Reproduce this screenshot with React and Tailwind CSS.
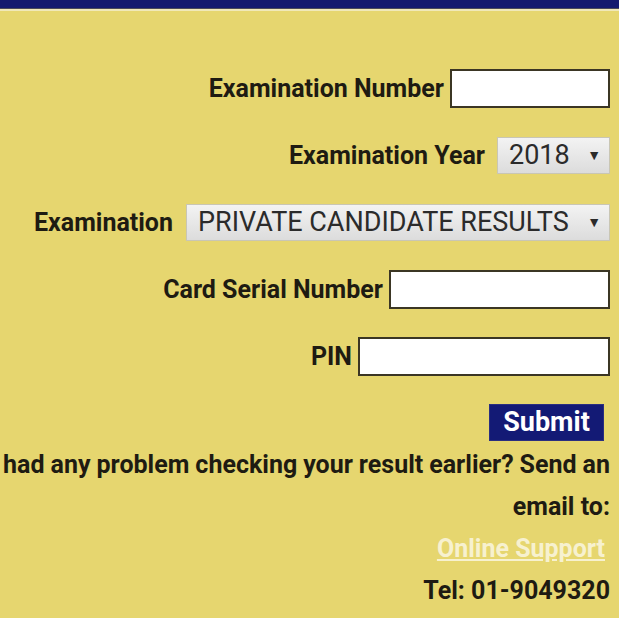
import React from "react";

const font = { fontFamily: "Roboto, 'Liberation Sans', sans-serif" };

function TextBox({ width }) {
  return (
    <input
      type="text"
      className={`h-[39px] ${width} shrink-0 border-2 border-[#3b3624] bg-white outline-none`}
    />
  );
}

function FakeSelect({ value, width }) {
  return (
    <div
      className={`h-[37px] ${width} shrink-0 flex items-center justify-between pl-[11px] pr-[8px] border border-[#c9c6b4] bg-gradient-to-b from-[#f3f3f3] to-[#dcdcdc] text-[#2b2b2b] text-[27px] font-normal`}
    >
      <span className="whitespace-nowrap">{value}</span>
      <span className="text-[14px] ml-2">▼</span>
    </div>
  );
}

function Row({ label, children, gap = "gap-[6px]" }) {
  return (
    <div className={`h-[39px] flex items-center justify-end ${gap}`}>
      <span className="whitespace-nowrap">{label}</span>
      {children}
    </div>
  );
}

export default function App() {
  return (
    <div className="w-[619px] h-[618px] overflow-hidden bg-[#e6d66f]" style={font}>
      {/* top bar */}
      <div className="h-[8px] bg-[#141a6e]" />
      <div className="h-[1px] bg-[#4a4a5a]" />
      <div className="h-[2px] bg-[#f0e8b8]" />

      <div className="pt-[58px] pr-[9px] flex flex-col gap-[28px] text-[25px] font-bold text-[#1e1b12]">
        <Row label="Examination Number">
          <TextBox width="w-[160px]" />
        </Row>
        <Row label="Examination Year" gap="gap-[12px]">
          <FakeSelect value="2018" width="w-[113px]" />
        </Row>
        <Row label="Examination" gap="gap-[13px]">
          <FakeSelect value="PRIVATE CANDIDATE RESULTS" width="w-[424px]" />
        </Row>
        <Row label="Card Serial Number">
          <TextBox width="w-[221px]" />
        </Row>
        <Row label="PIN">
          <TextBox width="w-[252px]" />
        </Row>
      </div>

      <div className="pr-[9px] text-[25px] font-bold text-[#1e1b12]">
        <div className="mt-[28px] h-[37px] flex justify-end pr-[6px]">
          <button className="w-[115px] h-[37px] bg-[#131a75] text-white text-[27px] font-bold border border-[#2a2f80] leading-none">
            Submit
          </button>
        </div>
        <div className="mt-[3px] text-right whitespace-nowrap leading-[42px] [word-spacing:-0.2px]">
          had any problem checking your result earlier? Send an
        </div>
        <div className="text-right leading-[42px]">email to:</div>
        <div className="text-right leading-[42px] pr-[5px]">
          <a href="#" className="text-[#f7f1cf] underline">
            Online Support
          </a>
        </div>
        <div className="text-right leading-[42px]">Tel: 01-9049320</div>
      </div>
    </div>
  );
}
